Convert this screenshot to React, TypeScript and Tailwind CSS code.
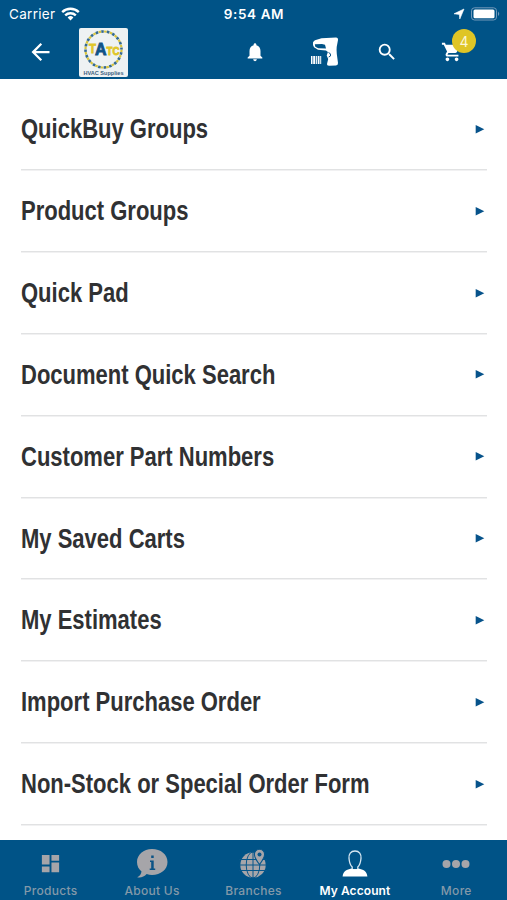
import { MdArrowBack, MdDashboard, MdNotifications, MdSearch, MdShoppingCart } from "react-icons/md";

const rows = [
  "QuickBuy Groups",
  "Product Groups",
  "Quick Pad",
  "Document Quick Search",
  "Customer Part Numbers",
  "My Saved Carts",
  "My Estimates",
  "Import Purchase Order",
  "Non-Stock or Special Order Form",
];

function Wifi() {
  return (
    <svg width="19" height="14" viewBox="0 0 19 14" fill="none" stroke="white" strokeWidth="2.4">
      <path d="M1.2 5.1a12 12 0 0 1 16.6 0M4.2 8.4a7.6 7.6 0 0 1 10.6 0" />
      <path d="M9.5 13.5 6.6 10.4a4.3 4.3 0 0 1 5.8 0Z" fill="white" stroke="none" />
    </svg>
  );
}

function Logo() {
  return (
    <div className="h-[49px] w-[49px] rounded-[2px] bg-[#eef2f3]">
      <svg width="49" height="49" viewBox="0 0 49 49" fontWeight="700" fontFamily="'Liberation Sans', sans-serif">
        <circle cx="24.5" cy="21.5" r="18" fill="none" stroke="#d7c43f" strokeWidth="2.2" strokeDasharray="2.7 2.96" />
        <circle cx="24.5" cy="21.5" r="18" fill="none" stroke="#356a91" strokeWidth="2.6" strokeDasharray="2.5 3.16" strokeDashoffset="-2.8" />
        <g fontSize="13" fill="#e0c629" stroke="#e0c629" strokeWidth="0.8">
          <text x="10" y="24.5" textLength="7" lengthAdjust="spacingAndGlyphs">T</text>
          <text x="27.5" y="27" fontSize="11" textLength="13" lengthAdjust="spacingAndGlyphs">TC</text>
        </g>
        <text x="16" y="27" fontSize="16" textLength="11.500" lengthAdjust="spacingAndGlyphs" stroke="#105387" strokeWidth="0.9" fill="#105387">A</text>
        <text x="4.5" y="46.5" textLength="40" lengthAdjust="spacingAndGlyphs" fontSize="6.2" fill="#3b617f">HVAC Supplies</text>
      </svg>
    </div>
  );
}

function Scanner() {
  return (
    <svg width="30" height="32" viewBox="0 0 30 32">
      <path fill="white" fillRule="evenodd" d="M3 6.5Q3.5 5 5 4.2L11.5 2.2 26 1.5Q28.3 1.5 28 4L26.7 11q-.3 3 .1 7l1.2 9q.2 2.3-2 2.5l-7 .3q-2.3-.1-1.9-2.3l1.1-4.5-1.5-3.5 1.2-3.5L16 14.5l-8-.7-4-2.5Q2.5 9.5 3 6.5ZM4.8 8.2l.5 2.5 3 1.5 7.7.4-1-3.8-3-.8Z" />
      <path d="M18.5 16.5q2.8.8 2 3.5l-1.8 1" fill="none" stroke="#0a5388" strokeWidth="1" />
      <path fill="white" d="M1 20h1.500v8H1Zm2.200 0h2v8h-2Zm2.700 0h1v8h-1Zm1.800 0h1.800v8H7.700Zm2.500 0h1v8h-1Z" />
    </svg>
  );
}

function StatusRight() {
  return (
    <svg width="48" height="16" viewBox="0 0 48 16">
      <path d="M11 3 6.8 13 6.3 8.4 1 7.8Z" fill="white" stroke="white" strokeWidth=".6" />
      <rect x="18.5" y="1.8" width="25" height="12.2" rx="3" fill="none" stroke="#7299ba" strokeWidth="1" />
      <rect x="20.5" y="3.6" width="21" height="8.7" rx="1.5" fill="white" />
      <path d="M45 5.5q2.5 2.3 0 4.6Z" fill="#7299ba" />
    </svg>
  );
}

function Info() {
  return (
    <svg width="34" height="32" viewBox="0 0 34 32">
      <path fill="#a6a5a9" d="M17 1C8.500 1 2 6.700 2 14c0 4 1.700 7.200 4.500 9.500-.3 2.700-1.800 4.500-4.300 5.800 3.700.7 7-.5 9.500-3.200 1.700.6 3.400.8 5.300.8 8.700 0 15.500-5.500 15.500-13S25.700 1 17 1Z" />
      <path fill="#0b5386" d="M16.200 7.500h2.500v2.500h-2.500Zm-1.200 5h3.700v8h1.500V22h-5.500v-1.500h1.500V14H15Z" />
    </svg>
  );
}

function Globe() {
  return (
    <svg width="30" height="32" viewBox="0 0 30 32">
      <circle cx="15" cy="17" r="12.7" fill="#a6a5a9" />
      <g fill="none" stroke="#07568b" strokeWidth="1">
        <path d="M1 11.5h28M1 17h28M1 22.5h28M15 3v27" />
        <ellipse cx="15" cy="17" rx="6.8" ry="13" />
      </g>
      <path d="M21.5 1.2a5.1 5.1 0 0 0-5.1 5.1C16.4 10 21.5 16.5 21.5 16.5s5.1-6.5 5.1-10.2A5.1 5.1 0 0 0 21.5 1.2Z" fill="#a6a5a9" stroke="#07568b" strokeWidth="1.1" />
      <circle cx="21.5" cy="6.5" r="2" fill="#07568b" />
    </svg>
  );
}

function Person() {
  return (
    <svg width="28" height="30" viewBox="0 0 28 30">
      <path d="M14 2c-4.300 0-6.400 3.200-6 7.300.3 3.700 1.300 7 3.200 8.700v2.700h5.600V18c1.900-1.700 2.900-5 3.200-8.700C20.400 5.200 18.300 2 14 2Z" fill="none" stroke="#d7e7f2" strokeWidth="1.3" />
      <path d="M10.5 19.500c1.700 1.200 5.300 1.200 7 0 4.800 1.300 8.200 2.200 8.900 8H1.600c.7-5.800 4.100-6.700 8.900-8Z" fill="white" />
    </svg>
  );
}

const tabs = [
  { label: "Products", icon: <MdDashboard className="size-[23px] text-[#a6a5a9]" /> },
  { label: "About Us", icon: <Info /> },
  { label: "Branches", icon: <Globe /> },
  { label: "My Account", icon: <Person />, active: true },
  {
    label: "More",
    icon: (
      <svg width="28" height="10" viewBox="0 0 28 10" fill="#a6a5a9">
        <circle cx="4.5" cy="5" r="4" /><circle cx="14" cy="5" r="4" /><circle cx="23.5" cy="5" r="4" />
      </svg>
    ),
  },
];

export default function App() {
  return (
    <div className="flex h-[900px] w-[507px] flex-col overflow-hidden bg-white font-['Inter','Liberation_Sans',sans-serif]">
      <header className="h-[79px] shrink-0 bg-[#005387] text-white">
        <div className="grid h-[27px] grid-cols-3 items-center pl-[9px] pr-[6px]">
          <div className="flex items-center gap-[6px] pt-px text-[13.5px] tracking-[0.3px]"><span>Carrier</span><Wifi /></div>
          <div className="pt-px pr-[2px] text-center text-[13.5px] font-semibold tracking-[0.6px]">9:54 AM</div>
          <div className="flex justify-end"><StatusRight /></div>
        </div>
        <div className="flex h-[50px] items-center pl-[27px]">
          <MdArrowBack className="h-[28px] w-[27px]" />
          <div className="ml-[25px]"><Logo /></div>
          <MdNotifications className="ml-[116px] size-[22px]" />
          <div className="ml-[44px]"><Scanner /></div>
          <MdSearch className="ml-[36px] size-[22px]" />
          <div className="relative ml-[43px]">
            <MdShoppingCart className="size-[22px]" />
            <span className="absolute left-[11px] top-[-12px] flex size-[24px] items-center justify-center rounded-full bg-[#dfc526] text-[14px] text-[#fbf6d8]">4</span>
          </div>
        </div>
      </header>
      <main className="min-h-0 flex-1 overflow-hidden pl-[21px] pr-[20px] pt-[9.4px]">
        {rows.map((label) => (
          <div key={label} className="flex h-[81.85px] items-center justify-between border-b-[1.5px] border-[#e1e2e3] shadow-[0_1px_0_#f1f1f2]">
            <span className="origin-left scale-x-[0.815] whitespace-nowrap pt-[2px] font-['Liberation_Sans',sans-serif] text-[27px] font-bold leading-none text-[#303133]">{label}</span>
            <svg className="mr-[2px]" width="10" height="10" viewBox="0 0 10 10"><path d="M.7 1v8.500L9.300 5.200Z" fill="#07538b" /></svg>
          </div>
        ))}
      </main>
      <nav className="grid h-[60px] shrink-0 grid-cols-5 bg-[#005387]">
        {tabs.map((tab) => (
          <div key={tab.label} className={`flex flex-col items-center ${tab.active ? "text-white" : "text-[#8399a9]"}`}>
            <div className="flex h-[43px] items-center justify-center pt-[4px]">{tab.icon}</div>
            <span className={`text-[12px] leading-[16px] ${tab.active ? "font-semibold tracking-[0.1px]" : "font-medium tracking-[0.3px]"}`}>{tab.label}</span>
          </div>
        ))}
      </nav>
    </div>
  );
}
